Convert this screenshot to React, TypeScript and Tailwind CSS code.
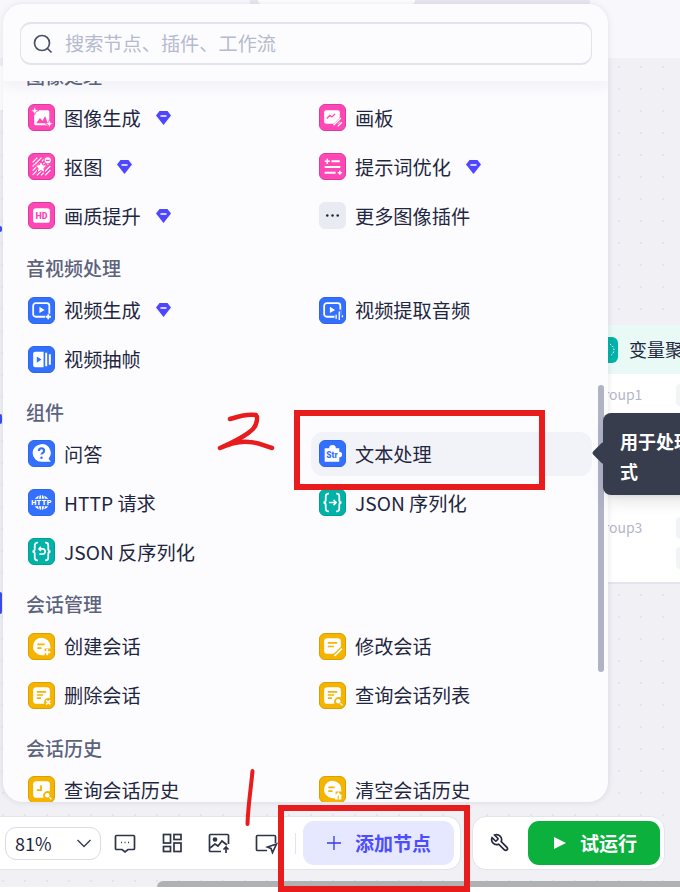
import React from 'react';

type Row = { label: string; icon: React.ReactNode; tile: string; vip?: boolean; active?: boolean };

const PINK = 'bg-[#ff47b5] border-[#d93c9e]';
const BLUE = 'bg-[#3370ff] border-[#2e66e6]';
const TEAL = 'bg-[#00b2a8] border-[#00a096]';
const YELLOW = 'bg-[#f5b400] border-[#d9a000]';

const Svg = ({ children }: { children: React.ReactNode }) => (
    <svg viewBox="0 0 24 24" className="w-full h-full" fill="none">{children}</svg>
);

const BRACES = 'M8.500 3.500H8C6.500 3.500 5.500 4.300 5.500 6v3.500c0 1.500-.8 2.500-2.200 2.500 1.400 0 2.200 1 2.200 2.500V18c0 1.700 1 2.500 2.500 2.500h.5M15.500 3.500h.5c1.500 0 2.500.8 2.500 2.500v3.500c0 1.500.8 2.500 2.200 2.500-1.400 0-2.200 1-2.200 2.500V18c0 1.700-1 2.500-2.500 2.500h-.5';

const icons = {
    imageGen: (
        <Svg>
            <rect x="5" y="5" width="14.500" height="14.500" rx="1.500" fill="#fff" />
            <path d="M7 17.500l3.500-5 2.500 2.500 2.500-4.500 2.500 7z" fill="#ff47b5" />
            <path d="M5.500 1.500l1.100 2.900 2.900 1.100-2.900 1.100-1.100 2.900-1.100-2.900-2.900-1.100 2.900-1.100zM19.500 14l1 2.900 2.900 1.100-2.900 1.100-1 2.900-1-2.900-2.900-1.100 2.900-1.100z" fill="#fff" stroke="#ff47b5" strokeWidth=".7" />
        </Svg>
    ),
    canvas: (
        <Svg>
            <rect x="4" y="5" width="15" height="13" rx="2" fill="#fff" />
            <path d="M6.500 13l3-3 2 1.500 3-3" stroke="#ff47b5" strokeWidth="1.300" />
            <path d="M13 20l7-7M17 21l4.500-4.500" stroke="#ff47b5" strokeWidth="2.600" />
            <path d="M13 19.500l7-7M17 20.500l4-4" stroke="#fff" strokeWidth="1.300" />
        </Svg>
    ),
    cutout: (
        <Svg>
            <path d="M3.500 8l4.500-4.500M3.500 12l8.500-8.500M3.500 16L16 3.500M3.500 20L20.500 3M7.500 20.500L20.500 7.500M11.500 20.500l9-9M15.500 20.500l5-5" stroke="#fff" strokeWidth="1.200" />
            <path d="M11.500 6.500l1.800 3.900 4.200.5-3.100 2.900.8 4.200-3.700-2.100-3.700 2.100.8-4.200-3.100-2.900 4.200-.5z" fill="#fff" stroke="#ff47b5" strokeWidth="1" />
            <circle cx="18" cy="6" r="3.500" fill="#fff" stroke="#ff47b5" strokeWidth="1" />
            <path d="M16.300 6h3.400" stroke="#ff47b5" strokeWidth="1.200" />
        </Svg>
    ),
    prompt: (
        <Svg>
            <path d="M11 7h8M4.500 12.500h15M4.500 18h10.500" stroke="#fff" strokeWidth="1.800" />
            <path d="M7 4.500v5M4.500 7h5M19 16v4M17 18h4" stroke="#fff" strokeWidth="1.500" />
        </Svg>
    ),
    hd: (
        <Svg>
            <rect x="4" y="5" width="16" height="14" rx="2.500" fill="#fff" />
            <text x="12" y="15.200" textAnchor="middle" fontSize="8.500" fontWeight="900" fontFamily="Roboto, sans-serif" fill="#ff47b5">HD</text>
        </Svg>
    ),
    more: (
        <Svg>
            <circle cx="7" cy="12" r="1.200" fill="#1f2433" />
            <circle cx="12" cy="12" r="1.200" fill="#1f2433" />
            <circle cx="17" cy="12" r="1.200" fill="#1f2433" />
        </Svg>
    ),
    videoGen: (
        <Svg>
            <rect x="4" y="5" width="15.500" height="13" rx="2.500" stroke="#fff" strokeWidth="1.700" />
            <path d="M10 8.500l5 3-5 3z" fill="#fff" />
            <path d="M18.500 15v6M15.500 18h6" stroke="#3370ff" strokeWidth="4" />
            <path d="M18.500 15.500v5M16 18h5" stroke="#fff" strokeWidth="1.700" />
        </Svg>
    ),
    videoAudio: (
        <Svg>
            <rect x="4" y="5" width="15.500" height="13" rx="2.500" stroke="#fff" strokeWidth="1.700" />
            <path d="M9.500 8.500l5 3-5 3z" fill="#fff" />
            <path d="M15.500 14v7M18.500 11v10M21.500 16v3" stroke="#3370ff" strokeWidth="3" />
            <path d="M15.500 16v4M18.500 13v8M21.500 16.500v2" stroke="#fff" strokeWidth="1.300" />
        </Svg>
    ),
    frames: (
        <Svg>
            <path d="M4 6.500a2 2 0 012-2h8v15H6a2 2 0 01-2-2z" fill="#fff" />
            <path d="M7.500 9l4.500 3-4.500 3z" fill="#3370ff" />
            <path d="M16.500 5.500v13M20 7v10" stroke="#fff" strokeWidth="1.900" />
        </Svg>
    ),
    qa: (
        <Svg>
            <path d="M12 3a8.500 8.500 0 100 17h9l-2.200-3A8.500 8.500 0 0012 3z" fill="#fff" />
            <path d="M9.500 9.500a2.500 2.500 0 115 0c0 1.700-2.500 2-2.500 3.500" stroke="#3370ff" strokeWidth="2" />
            <circle cx="12" cy="16" r="1.200" fill="#3370ff" />
        </Svg>
    ),
    text: (
        <Svg>
            <path d="M4.500 7h4.300a3.200 3.200 0 016.400 0h3.300v3.300a2.700 2.700 0 010 5.400V20H4.500z" fill="#fff" />
            <text x="11.500" y="16" textAnchor="middle" fontSize="8" fontWeight="900" fontFamily="Roboto, sans-serif" fill="#3370ff">Str</text>
        </Svg>
    ),
    http: (
        <Svg>
            <path d="M5.500 8.500a7.800 7.800 0 0113 0zM5.500 15.500a7.800 7.800 0 0013 0z" fill="#fff" />
            <path d="M12 2.500v6M12 15.500v6M9 8.500l1.500-5.500M15 8.500l-1.500-5.500M9 15.500l1.500 5.500M15 15.500l-1.500 5.500" stroke="#3370ff" strokeWidth=".8" />
            <text x="12" y="14.500" textAnchor="middle" fontSize="7" fontWeight="900" letterSpacing=".4" fontFamily="Roboto, sans-serif" fill="#fff">HTTP</text>
        </Svg>
    ),
    jsonTo: (
        <Svg>
            <path d={BRACES} stroke="#fff" strokeWidth="1.700" />
            <path d="M8.500 12h7M13 9.500l2.500 2.500-2.500 2.500" stroke="#fff" strokeWidth="1.500" />
        </Svg>
    ),
    jsonFrom: (
        <Svg>
            <path d={BRACES} stroke="#fff" strokeWidth="1.700" />
            <path d="M9.500 9.500h3.500a2.500 2.500 0 010 5H10M11.500 7.500L9.500 9.500l2 2" stroke="#fff" strokeWidth="1.500" />
        </Svg>
    ),
    chatAdd: (
        <Svg>
            <path d="M12 3.500a8.500 8.500 0 018.500 8.500v2H15v6.500h-3l-3.500-1A8.500 8.500 0 0112 3.500z" fill="#fff" />
            <path d="M8 10h7M8 13.500h4" stroke="#f5b400" strokeWidth="1.800" />
            <path d="M17.500 14.500v6M14.500 17.500h6" stroke="#fff" strokeWidth="1.800" />
        </Svg>
    ),
    chatEdit: (
        <Svg>
            <rect x="4" y="4" width="16" height="15" rx="3" fill="#fff" />
            <path d="M7.500 8.500h9M7.500 12h6" stroke="#f5b400" strokeWidth="1.600" />
            <path d="M13 22l8-8" stroke="#f5b400" strokeWidth="4" />
            <path d="M14 21l7-7" stroke="#fff" strokeWidth="1.500" />
        </Svg>
    ),
    chatDel: (
        <Svg>
            <rect x="4" y="4" width="16" height="16" rx="3" fill="#fff" />
            <path d="M7.500 8.500h9M7.500 11.500h6M7.500 14.500h4" stroke="#f5b400" strokeWidth="1.500" />
            <circle cx="18.500" cy="18.500" r="4" fill="#f5b400" />
            <path d="M16.500 16.500l4 4M20.500 16.500l-4 4" stroke="#fff" strokeWidth="1.500" />
        </Svg>
    ),
    chatFind: (
        <Svg>
            <rect x="4" y="4" width="16" height="16" rx="3" fill="#fff" />
            <path d="M7.500 8.500h9M7.500 11.500h6M7.500 14.500h4" stroke="#f5b400" strokeWidth="1.500" />
            <circle cx="18" cy="18" r="4.500" fill="#f5b400" />
            <circle cx="17.500" cy="17.500" r="2.200" fill="#fff" />
            <path d="M19.500 19.500l2 2" stroke="#fff" strokeWidth="1.300" />
        </Svg>
    ),
    historyFind: (
        <Svg>
            <rect x="4" y="4" width="16" height="16" rx="3" fill="#fff" />
            <path d="M11.500 8v4.500H7.500" stroke="#f5b400" strokeWidth="1.700" />
            <circle cx="18" cy="18" r="4.500" fill="#f5b400" />
            <circle cx="17.500" cy="17.500" r="2.200" fill="#fff" />
            <path d="M19.500 19.500l2 2" stroke="#fff" strokeWidth="1.300" />
        </Svg>
    ),
    historyClear: (
        <Svg>
            <path d="M12 3.500a8.500 8.500 0 018.500 8.500v2H15v6.500h-3l-3.500-1A8.500 8.500 0 0112 3.500z" fill="#fff" />
            <path d="M8 10h6M8 13.500h4" stroke="#f5b400" strokeWidth="1.800" />
            <path d="M14.500 17.500l3-3 3 3v4h-6z" fill="#fff" />
            <path d="M17.500 18v3.500" stroke="#f5b400" strokeWidth="1" />
        </Svg>
    ),
};

const sections: { title: string; rows: Row[] }[] = [
    {
        title: '图像处理',
        rows: [
            { label: '图像生成', icon: icons.imageGen, tile: PINK, vip: true },
            { label: '画板', icon: icons.canvas, tile: PINK },
            { label: '抠图', icon: icons.cutout, tile: PINK, vip: true },
            { label: '提示词优化', icon: icons.prompt, tile: PINK, vip: true },
            { label: '画质提升', icon: icons.hd, tile: PINK, vip: true },
            { label: '更多图像插件', icon: icons.more, tile: 'bg-[#e9ebf2] border-[#e9ebf2]' },
        ],
    },
    {
        title: '音视频处理',
        rows: [
            { label: '视频生成', icon: icons.videoGen, tile: BLUE, vip: true },
            { label: '视频提取音频', icon: icons.videoAudio, tile: BLUE },
            { label: '视频抽帧', icon: icons.frames, tile: BLUE },
        ],
    },
    {
        title: '组件',
        rows: [
            { label: '问答', icon: icons.qa, tile: BLUE },
            { label: '文本处理', icon: icons.text, tile: BLUE, active: true },
            { label: 'HTTP 请求', icon: icons.http, tile: BLUE },
            { label: 'JSON 序列化', icon: icons.jsonTo, tile: TEAL },
            { label: 'JSON 反序列化', icon: icons.jsonFrom, tile: TEAL },
        ],
    },
    {
        title: '会话管理',
        rows: [
            { label: '创建会话', icon: icons.chatAdd, tile: YELLOW },
            { label: '修改会话', icon: icons.chatEdit, tile: YELLOW },
            { label: '删除会话', icon: icons.chatDel, tile: YELLOW },
            { label: '查询会话列表', icon: icons.chatFind, tile: YELLOW },
        ],
    },
    {
        title: '会话历史',
        rows: [
            { label: '查询会话历史', icon: icons.historyFind, tile: YELLOW },
            { label: '清空会话历史', icon: icons.historyClear, tile: YELLOW },
        ],
    },
];

const Diamond = () => (
    <svg viewBox="0 0 15 14" className="w-[15px] h-[14px] ml-[15px] shrink-0">
        <path d="M3.500 0h8L15 4.500 7.500 14 0 4.500z" fill="#4f46ff" />
        <path d="M4.500 5h6" stroke="#fff" strokeWidth="1.500" />
    </svg>
);

const NodeRow = ({ row }: { row: Row }) => (
    <div className={`h-[44px] flex items-center pl-2 rounded-xl ${row.active ? 'bg-[#f2f3f9]' : ''}`}>
        <div className={`w-[27px] h-[27px] rounded-[6px] border shrink-0 overflow-hidden ${row.tile}`}>{row.icon}</div>
        <span className="ml-[9px] text-[19.200px] leading-[26px] text-[#1f2640]">{row.label}</span>
        {row.vip && <Diamond />}
    </div>
);

const ToolIcon = ({ children }: { children: React.ReactNode }) => (
    <svg viewBox="0 0 24 24" className="w-[24px] h-[24px] shrink-0" fill="none" stroke="#2e3448" strokeWidth="1.700">
        {children}
    </svg>
);

export default function App() {
    return (
        <div className="relative w-[680px] h-[892px] overflow-hidden bg-white font-['Noto_Sans_CJK_SC','Noto_Sans',sans-serif]">
            {/* Canvas */}
            <div className="absolute inset-x-0 top-0 h-[887px] bg-[#f0f0f5] bg-[radial-gradient(#e4e4ec_1.500px,transparent_1.500px)] bg-[length:22px_22px] bg-[position:-8px_-10px]"></div>
            <div className="absolute inset-x-0 top-0 h-[58px] bg-[#f8f8fc]"></div>
            <div className="absolute left-[250px] top-0 w-[340px] h-[6px] bg-[#e9e9f3]"></div>
            <div className="absolute left-[258px] top-0 w-[157px] h-[4px] bg-white rounded-b-lg"></div>
            <div className="absolute left-0 top-[66px] w-[3px] h-[44px] bg-white"></div>
            <div className="absolute left-0 top-[226px] w-[2px] h-[6px] rounded-r-full bg-[#3a4cf0]"></div>
            <div className="absolute left-0 top-[414px] w-[2px] h-[10px] rounded-r-full bg-[#3a4cf0]"></div>
            <div className="absolute left-0 top-[592px] w-[2px] h-[22px] rounded-r-full bg-[#3a4cf0]"></div>

            {/* Node behind the panel */}
            <div className="absolute left-[590px] top-[325px] w-[140px] h-[259px] bg-white border-b-2 border-[#e3e4ec]">
                <div className="h-[49px] flex items-center pl-[10px] bg-[#e9f9f6]">
                    <div className="w-[16px] h-[26px] ml-[2px] rounded-[6px] bg-[#00b2a8] flex items-center justify-end pr-[3px]">
                        <svg viewBox="0 0 6 14" className="w-[6px] h-[14px]" fill="none" stroke="#fff" strokeWidth="1" strokeDasharray="1.500 1.500">
                            <path d="M1 1c3 2 4 4 4 6s-1 4-4 6" />
                        </svg>
                    </div>
                    <span className="ml-[11px] text-[18px] text-[#1f2640] whitespace-nowrap">变量聚合</span>
                </div>
                <div className="flex pl-[3px] pt-[10px]">
                    <span className="w-[83px] pl-[1px] text-[14px] leading-[20px] text-[#b3b6c8]">Group1</span>
                    <div className="w-[30px] h-[22px] rounded bg-[#f3f4f8]"></div>
                </div>
                <div className="flex pl-[3px] mt-[111px]">
                    <span className="w-[83px] pl-[1px] text-[14px] leading-[20px] text-[#b3b6c8]">Group3</span>
                    <div className="flex flex-col gap-[8px]">
                        <div className="w-[30px] h-[22px] rounded bg-[#f3f4f8]"></div>
                        <div className="w-[30px] h-[22px] rounded bg-[#f3f4f8]"></div>
                    </div>
                </div>
            </div>

            {/* Panel */}
            <div className="absolute left-[3px] top-[4px] w-[605px] h-[798px] rounded-[20px] bg-[#fcfcff] shadow-[0_0_6px_rgba(40,40,80,0.12)] overflow-hidden flex flex-col">
                <div className="relative z-10 h-[77px] shrink-0 pl-[17px] pr-[16px] pt-[18px] bg-[#fcfcff] shadow-[0_6px_12px_rgba(40,40,80,0.05)]">
                    <div className="h-[43px] flex items-center pl-[12px] rounded-[11px] border-2 border-[#e1e3ed] border-l border-r">
                        <svg viewBox="0 0 20 20" className="w-[20px] h-[20px] shrink-0" fill="none" stroke="#4a5068" strokeWidth="1.700">
                            <circle cx="9" cy="9" r="7.500" />
                            <path d="M14.500 14.500l4 4" />
                        </svg>
                        <input
                            placeholder="搜索节点、插件、工作流"
                            className="ml-[12px] flex-1 bg-transparent outline-none text-[19.200px] placeholder:text-[#b6bace]"
                        />
                    </div>
                </div>
                <div className="relative flex-1 overflow-hidden">
                    <div className="pl-[17px] pr-[16px] -mt-[18.500px]">
                        {sections.map((section, idx) => (
                            <div key={idx} className="mb-[17.500px]">
                                <div className="h-[26px] mb-[7px] pl-[6px] text-[19px] leading-[26px] font-medium text-[#5d637b]">{section.title}</div>
                                <div className="grid grid-cols-2 gap-x-[10px] gap-y-[5px]">
                                    {section.rows.map((row, i) => (
                                        <NodeRow key={i} row={row} />
                                    ))}
                                </div>
                            </div>
                        ))}
                    </div>
                    <div className="absolute left-[595px] top-[304px] w-[6px] h-[287px] rounded-full bg-[#b0b3c6]"></div>
                </div>
            </div>

            {/* Tooltip */}
            <div className="absolute left-[603px] top-[413px] w-[300px] h-[82px] rounded-lg bg-[#373d4d] pl-[17px] pt-[13px] text-[18px] leading-[30px] font-bold text-white shadow-lg">
                <div className="absolute -left-[8px] top-[32px] w-[16px] h-[16px] rotate-45 rounded-[2px] bg-[#373d4d]"></div>
                <p className="relative">用于处理多个字符串类型变量的格<br />式</p>
            </div>

            {/* Bottom toolbar */}
            <div className="absolute left-0 right-[15px] top-[816px] h-[54px] flex gap-[11px]">
                <div className="w-[461px] flex items-center pl-[5px] bg-white rounded-r-[14px] border border-l-0 border-[#e3e4ec]">
                    <div className="w-[96px] h-[33px] flex items-center justify-between pl-[9px] pr-[8px] rounded-[11px] border border-[#d9dbe6] text-[18px] text-[#1f2640]">
                        <span>81%</span>
                        <svg viewBox="0 0 16 16" className="w-[16px] h-[16px]" fill="none" stroke="#3a4058" strokeWidth="1.500">
                            <path d="M1.500 5l6.500 6.500L14.500 5" />
                        </svg>
                    </div>
                    <div className="flex items-center gap-[23px] ml-[12px] w-[175px] overflow-hidden">
                        <ToolIcon>
                            <path d="M3.500 4.500h17a1 1 0 011 1v12a1 1 0 01-1 1H15l-3 2.500L9 18.500H3.500a1 1 0 01-1-1v-12a1 1 0 011-1z" />
                            <path d="M8 11.500h1M11.500 11.500h1M15 11.500h1" />
                        </ToolIcon>
                        <ToolIcon>
                            <rect x="3.500" y="3.500" width="7" height="8.500" />
                            <rect x="14" y="3.500" width="7" height="5" />
                            <rect x="3.500" y="15.500" width="7" height="5" />
                            <rect x="14" y="12" width="7" height="8.500" />
                        </ToolIcon>
                        <ToolIcon>
                            <path d="M14 20.500H3.500a1 1 0 01-1-1v-15a1 1 0 011-1h17a1 1 0 011 1V13" />
                            <circle cx="8" cy="8.500" r="1.500" fill="#2e3448" />
                            <path d="M3 17l5-4 3 2 4-5 5 4" />
                            <path d="M19 22v-6M16.500 18.500l2.500-2.500 2.500 2.500" />
                        </ToolIcon>
                        <ToolIcon>
                            <path d="M13 19.500H3.500a1 1 0 01-1-1v-13a1 1 0 011-1h17a1 1 0 011 1V12" />
                            <path d="M22.500 13l-9 3 3.500 1.500 1.500 4z" />
                        </ToolIcon>
                    </div>
                    <div className="w-px h-[21px] bg-[#e3e4ec] ml-[7px]"></div>
                    <div className="w-[151px] h-[44px] ml-[7px] flex items-center rounded-[11px] bg-[#e6e8ff] text-[#4d4dff]">
                        <svg viewBox="0 0 14 14" className="w-[14px] h-[14px] ml-[24px]" fill="none" stroke="#3a3ae8" strokeWidth="1.300">
                            <path d="M7 0v14M0 7h14" />
                        </svg>
                        <span className="ml-[14px] text-[19px] font-bold">添加节点</span>
                    </div>
                </div>
                <div className="flex-1 flex items-center pl-[17px] bg-white rounded-[14px] border border-[#e3e4ec]">
                    <svg viewBox="0 0 24 24" className="w-[20px] h-[20px] shrink-0" fill="none" stroke="#23283a" strokeWidth="2">
                        <path d="M14.700 6.300a1 1 0 000 1.400l1.600 1.600a1 1 0 001.400 0l3.800-3.800a6 6 0 01-7.900 7.900l-6.900 6.900a2.100 2.100 0 01-3-3l6.900-6.900a6 6 0 017.900-7.900z" transform="matrix(-1 0 0 1 24 0)" />
                    </svg>
                    <div className="w-[132px] h-[44px] ml-[18px] flex items-center rounded-[11px] bg-[#0bb03d] text-white">
                        <svg viewBox="0 0 12 12" className="w-[12px] h-[12px] ml-[26px]">
                            <path d="M0 0l12 6-12 6z" fill="#fff" />
                        </svg>
                        <span className="ml-[14px] text-[19px] font-bold">试运行</span>
                    </div>
                </div>
            </div>

            {/* Horizontal scrollbar */}
            <div className="absolute left-[157px] right-0 top-[881px] h-[6px] rounded-tl-md bg-[#b0b1b5]"></div>

            {/* Red annotations */}
            <div className="absolute left-[294px] top-[410px] w-[251px] h-[80px] border-[6px] border-[#e81c1c]"></div>
            <div className="absolute left-[278px] top-[805px] w-[192px] h-[87px] border-[6px] border-[#e81c1c]"></div>
            <svg viewBox="0 0 60 40" className="absolute left-[217px] top-[412px] w-[60px] h-[40px]" fill="none" stroke="#e81c1c" strokeWidth="4.500" strokeLinecap="round" strokeLinejoin="round">
                <path d="M13 7C22 4 33 2 39 3 41 5 40 13 36 17 31 22 25 26 3 36 12 32 24 29 32 30 40 30 48 34 55 36" />
            </svg>
            <svg viewBox="0 0 10 60" className="absolute left-[245px] top-[768px] w-[10px] h-[60px]" fill="none" stroke="#e81c1c" strokeWidth="4" strokeLinecap="round">
                <path d="M7.500 3C6 20 3 38 2.500 56" />
            </svg>
        </div>
    );
}
